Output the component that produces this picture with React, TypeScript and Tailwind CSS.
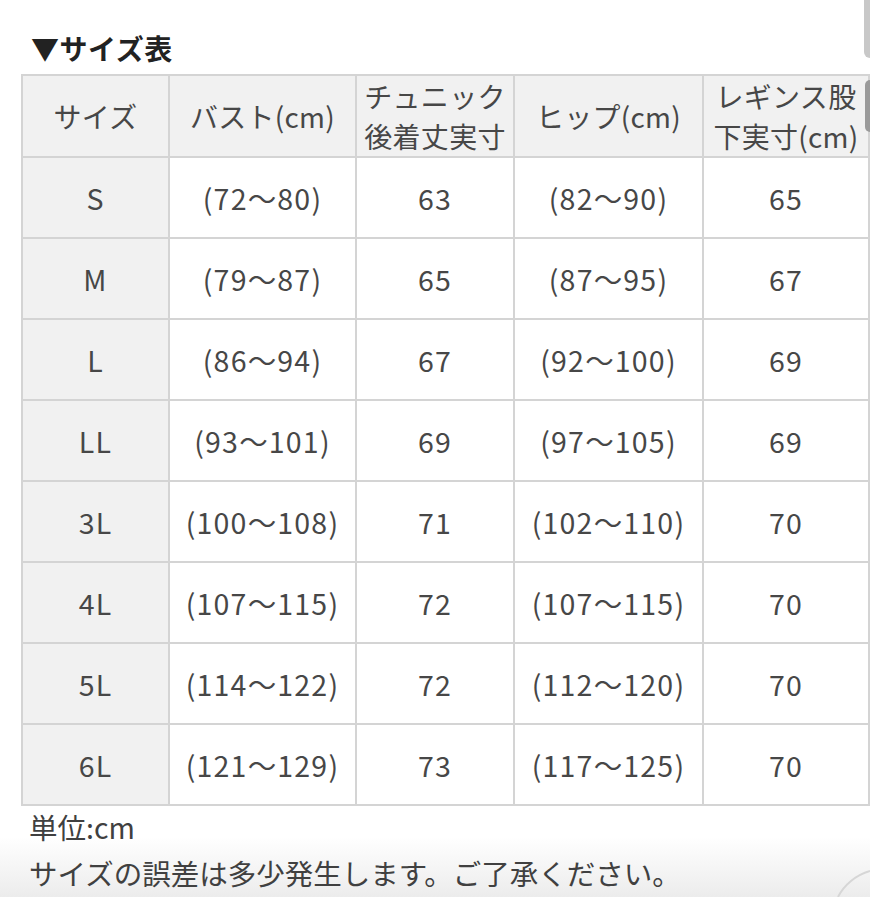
const rows: [string, string, string, string, string][] = [
  ['S', '(72〜80)', '63', '(82〜90)', '65'],
  ['M', '(79〜87)', '65', '(87〜95)', '67'],
  ['L', '(86〜94)', '67', '(92〜100)', '69'],
  ['LL', '(93〜101)', '69', '(97〜105)', '69'],
  ['3L', '(100〜108)', '71', '(102〜110)', '70'],
  ['4L', '(107〜115)', '72', '(107〜115)', '70'],
  ['5L', '(114〜122)', '72', '(112〜120)', '70'],
  ['6L', '(121〜129)', '73', '(117〜125)', '70'],
]

const cell = 'border-2 border-[#d4d4d4] text-center align-middle p-0'

export default function App() {
  return (
    <div
      className="relative w-[870px] h-[897px] overflow-hidden bg-white text-[#474747]"
      style={{ fontFamily: '"Noto Sans CJK JP", "Noto Sans", sans-serif' }}
    >
      {/* soft shadow at the bottom of the screenshot */}
      <div className="pointer-events-none absolute left-0 right-0 bottom-0 h-[60px] bg-gradient-to-b from-white/0 to-[#ececec]" />

      <div className="relative pl-[31px] pt-[29px] h-[74px] text-[28px] leading-[38px] font-bold text-[#222] tracking-[0.5px]">
        ▼サイズ表
      </div>

      <table className="relative ml-[21px] table-fixed border-collapse leading-[40px]">
        <colgroup>
          <col className="w-[147px]" />
          <col className="w-[187px]" />
          <col className="w-[158px]" />
          <col className="w-[189px]" />
          <col className="w-[166px]" />
        </colgroup>
        <thead>
          <tr className="h-[82px] bg-[#f1f1f1] text-[28px] tracking-[0.3px]">
            <th className={`${cell} font-normal`}>サイズ</th>
            <th className={`${cell} font-normal`}>バスト(cm)</th>
            <th className={`${cell} font-normal`}>
              チュニック
              <br />
              後着丈実寸
            </th>
            <th className={`${cell} font-normal`}>ヒップ(cm)</th>
            <th className={`${cell} font-normal`}>
              レギンス股
              <br />
              下実寸(cm)
            </th>
          </tr>
        </thead>
        <tbody className="text-[28.5px] tracking-[1.2px]">
          {rows.map((r) => (
            <tr key={r[0]} className="h-[81px]">
              <td className={`${cell} bg-[#f1f1f1]`}>{r[0]}</td>
              <td className={cell}>{r[1]}</td>
              <td className={cell}>{r[2]}</td>
              <td className={cell}>{r[3]}</td>
              <td className={cell}>{r[4]}</td>
            </tr>
          ))}
        </tbody>
      </table>

      <div className="relative pl-[29px] text-[28.5px] leading-[46px] text-[#404040]">
        <div className="-mt-[2px]">単位:cm</div>
        <div>サイズの誤差は多少発生します。ご了承ください。</div>
      </div>

      {/* scroll handle at the right edge */}
      <div className="absolute right-0 top-0 w-[6px] h-[58px] rounded-bl-[6px] bg-[#c8c8c8]" />
      <div className="absolute right-0 top-[80px] w-[5px] h-[52px] rounded-l-[6px] bg-[#9a9a9a]" />

      {/* corner of a round button peeking in */}
      <svg className="absolute right-0 bottom-0" width="40" height="30" viewBox="0 0 40 30">
        <path d="M8 30 C14 18 26 8 40 4" fill="none" stroke="#d6d6d6" strokeWidth="2" />
      </svg>
    </div>
  )
}
